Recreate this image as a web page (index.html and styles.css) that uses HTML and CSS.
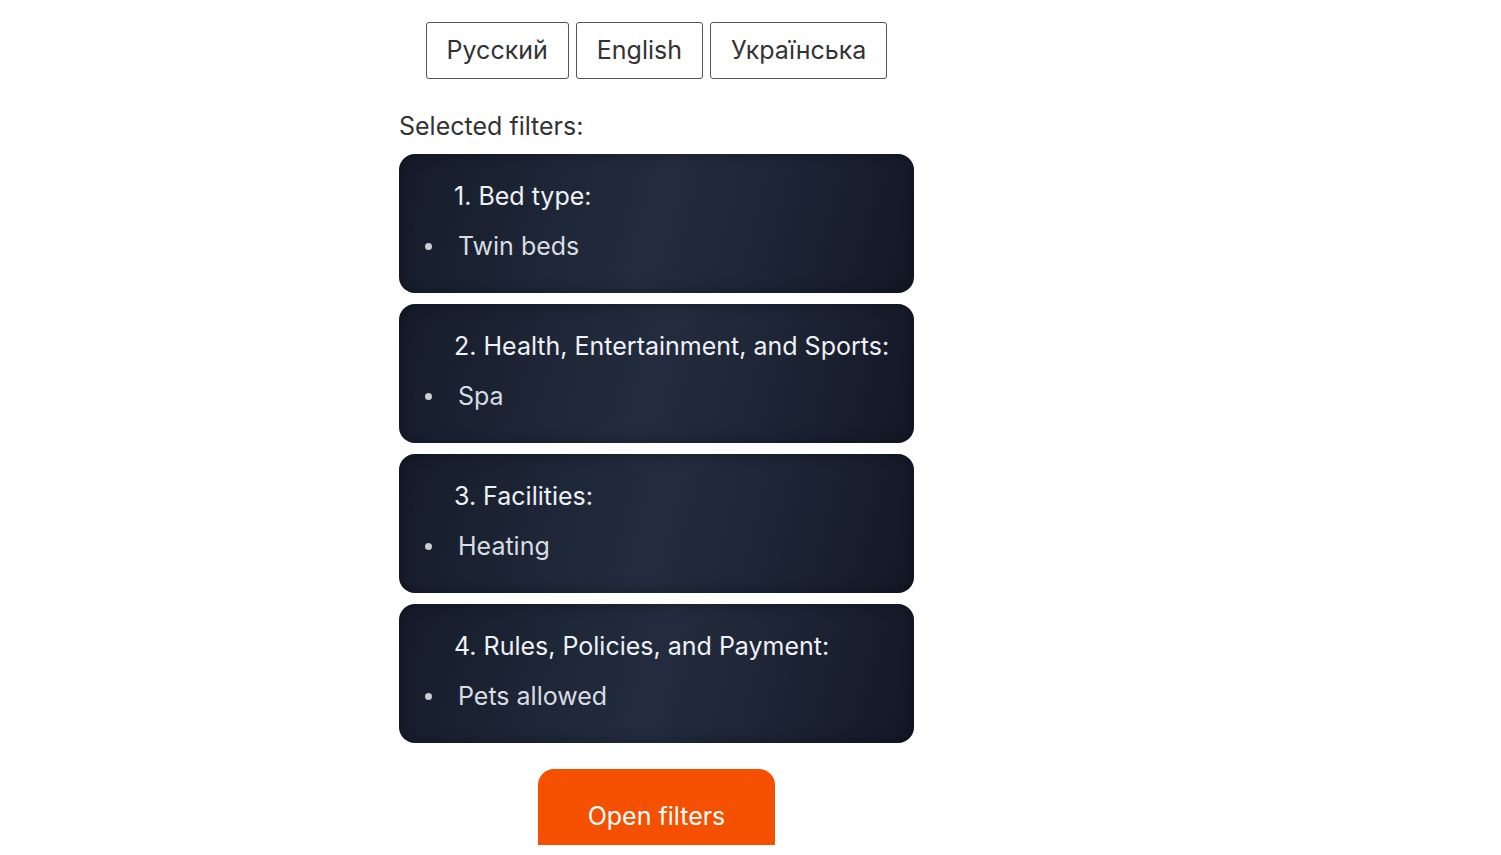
FILE: index.html
```html
<!DOCTYPE html>
<html lang="en">
<head>
<meta charset="utf-8">
<title>Selected filters</title>
<link rel="stylesheet" href="styles.css">
</head>
<body>
<div class="page">
  <div class="panel">
    <div class="langs">
      <button class="lang">Русский</button>
      <button class="lang">English</button>
      <button class="lang">Українська</button>
    </div>
    <div class="label">Selected filters:</div>
    <div class="cards">
      <div class="card">
        <div class="title">1. Bed type:</div>
        <div class="item"><span class="dot"></span><span>Twin beds</span></div>
      </div>
      <div class="card">
        <div class="title">2. Health, Entertainment, and Sports:</div>
        <div class="item"><span class="dot"></span><span>Spa</span></div>
      </div>
      <div class="card">
        <div class="title">3. Facilities:</div>
        <div class="item"><span class="dot"></span><span>Heating</span></div>
      </div>
      <div class="card">
        <div class="title">4. Rules, Policies, and Payment:</div>
        <div class="item"><span class="dot"></span><span>Pets allowed</span></div>
      </div>
    </div>
    <div class="actions">
      <button class="open">Open filters</button>
    </div>
  </div>
</div>
</body>
</html>
```

FILE: styles.css
```css
html, body {
  margin: 0;
  padding: 0;
  background: #ffffff;
}
body {
  font-family: Inter, "Noto Sans", sans-serif;
  font-size: 25px;
  color: #333333;
}
.page {
  height: 855px;
  overflow: hidden;
  padding-left: 399px;
}
.panel {
  width: 515px;
  display: flex;
  flex-direction: column;
}
.langs {
  display: flex;
  justify-content: center;
  gap: 7px;
  padding-top: 22px;
}
.lang {
  font-family: Inter, "Noto Sans", sans-serif;
  font-size: 25px;
  color: #333333;
  background: #ffffff;
  border: 1px solid #555555;
  border-radius: 3px;
  height: 57px;
  padding: 0 20px;
  line-height: 29px;
}
.label {
  margin-top: 33px;
  line-height: 29px;
  color: #333333;
}
.cards {
  margin-top: 13px;
  display: flex;
  flex-direction: column;
  gap: 11px;
}
.card {
  border-radius: 16px;
  padding: 28px 20px 32px 20px;
  background: linear-gradient(105deg, #151b2a 0%, #1f2839 35%, #232c3e 50%, #1d2536 70%, #131826 100%);
  box-shadow: inset 0 0 14px rgba(0, 0, 0, 0.35);
  color: #eef1f5;
}
.title {
  line-height: 29px;
  padding-left: 35px;
  color: #eef1f5;
}
.item {
  margin-top: 21px;
  line-height: 29px;
  display: flex;
  align-items: center;
  color: #d8dce3;
}
.dot {
  width: 7px;
  height: 7px;
  border-radius: 50%;
  background: #c9cdd4;
  margin-left: 6px;
  margin-right: 26px;
  flex: none;
}
.actions {
  display: flex;
  justify-content: center;
  margin-top: 26px;
}
.open {
  font-family: Inter, "Noto Sans", sans-serif;
  font-size: 25px;
  color: #ffffff;
  background: #f55000;
  border: none;
  border-radius: 16px 16px 0 0;
  width: 237px;
  height: 76px;
  padding: 33px 0 14px 0;
  line-height: 29px;
}
```
